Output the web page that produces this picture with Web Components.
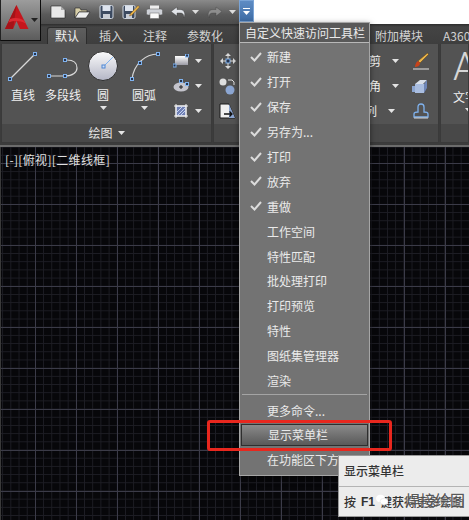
<!DOCTYPE html>
<html>
<head>
<meta charset="utf-8">
<style>
  html, body { margin: 0; background: #fff; }
  body { width: 469px; height: 520px; overflow: hidden; font: 12px/1 "Noto Sans CJK SC", "Liberation Sans", sans-serif; }
</style>
</head>
<body>
<cad-window>
  <cad-qat></cad-qat>
  <cad-tabs></cad-tabs>
  <cad-ribbon></cad-ribbon>
  <cad-canvas></cad-canvas>
  <cad-app></cad-app>
  <cad-menu></cad-menu>
  <cad-callout></cad-callout>
  <cad-tooltip></cad-tooltip>
</cad-window>

<script>
// small helper, every component below uses it
function define(name, html, setup){
  customElements.define(name, class extends HTMLElement {
    constructor(){
      super();
      this.attachShadow({mode:'open'}).innerHTML = html;
      if(setup) setup(this);
    }
  });
}

/* -----------------------
   ICONS
------------------------ */
const H = (x,y)=>`<rect x="${x-1.5}" y="${y-1.5}" width="3" height="3" fill="#26344e" stroke="#7fb2ee"/>`;
const svg = (w,h,body)=>`<svg width="${w}" height="${h}" viewBox="0 0 ${w} ${h}" style="display:block">${body}</svg>`;
const down = (c='#e4e4e4')=>`<svg width="7" height="4" viewBox="0 0 7 4" style="display:block"><path d="M0 0H7L3.5 4Z" fill="${c}"/></svg>`;

const ICONS = {
  line: svg(32,32,`<path d="M3 29 27 5" stroke="#d8d8d8" stroke-width="1.2"/>${H(3,29)}${H(28,4)}`),
  pline: svg(34,32,`<path d="M5 26H21C29 26 33 22 33 18 33 12 28 10 23 10" transform="translate(-2 0)" fill="none" stroke="#d8d8d8" stroke-width="1.2"/>${H(3,26)}${H(19,26)}${H(19,10)}`),
  circle: svg(32,32,`<defs><linearGradient id="c" x1="0" y1="0" x2="0" y2="1"><stop offset="0" stop-color="#fbfbfb"/><stop offset="1" stop-color="#b4b6c6"/></linearGradient></defs><circle cx="16" cy="16" r="14.5" fill="url(#c)" stroke="#2e2e2e"/><path d="M17 16 26 7" stroke="#7fb2ee"/><rect x="15" y="15" width="3" height="3" fill="#cfe0f8" stroke="#4f86d2"/>`),
  arc: svg(32,32,`<path d="M4 29C6 14 17 4 30 4" fill="none" stroke="#d8d8d8" stroke-width="1.2"/>${H(4,29)}${H(12,13)}${H(30,4)}`),
  rect: svg(16,14,`<defs><linearGradient id="r" x1="0" y1="0" x2="0" y2="1"><stop offset="0" stop-color="#fff"/><stop offset="1" stop-color="#9a9aa4"/></linearGradient></defs><rect x="2" y="2" width="13" height="9" fill="url(#r)"/>${H(1.5,11.5)}${H(14,1.5)}`),
  ellipse: svg(16,14,`<ellipse cx="8" cy="8" rx="7.5" ry="4.5" fill="#c4c4cc"/><path d="M6 8h4M8 6v4" stroke="#222"/>${H(8,2)}${H(14,5)}`),
  hatch: svg(16,16,`<rect x="3" y="3" width="10" height="10" fill="#6f7fb4" stroke="#fff"/><path d="M3 1V15M13 1V15M1 3H15M1 13H15" stroke="#f0f0f0"/><path d="M5 12 12 5M4 9 9 4M8 12 12 8" stroke="#c6d4f0"/>`),
  move: svg(16,16,`<path d="M8 0 11 3H5ZM8 16 5 13H11ZM0 8 3 5V11ZM16 8 13 11V5Z" fill="#d8d8d8"/><rect x="6" y="6" width="4" height="4" fill="#26344e" stroke="#7fb2ee"/><path d="M3 8H6M10 8H13M8 3V6M8 10V13" stroke="#d8d8d8"/>`),
  copy: svg(17,17,`<circle cx="4" cy="4" r="3.5" fill="#dedede"/><circle cx="11" cy="12" r="4.5" fill="#8ca6d2"/><path d="M9 2h4l2 2v3" fill="none" stroke="#e0e0e0"/>`),
  stretch: svg(17,16,`<path d="M1 1H10L16 15H1Z" fill="#f0f0f0" stroke="#1b1b1b"/><path d="M10 1 16 15H10Z" fill="#8ca6d2"/><path d="M5 11H13M10.5 8.5 13 11 10.5 13.5" fill="none" stroke="#111" stroke-width="1.3"/>`),
  brush: svg(17,18,`<path d="M15.5 1 16.5 2.5 8 11 6 9Z" fill="#eab54a" stroke="#5a3a10" stroke-width=".5"/><path d="M6 9 8 11C8 14 5 15 3 15 3 13 4 10 6 9Z" fill="#c8431a"/><path d="M1 17H17" stroke="#e4e4e4"/>`),
  block: svg(17,15,`<path d="M3 5 8 1H15L11 5Z" fill="#d8dfea"/><rect x="3" y="5" width="9" height="9" fill="#a9bde0"/><path d="M12 5 15 1V9L12 14Z" fill="#6e86b8"/><path d="M0 7H3V13H0Z" fill="#8ca6d2"/>`),
  explode: svg(16,16,`<path d="M1 14V11C1 9 3 9 5 9V4C5 2 6 1 8 1S11 2 11 4V9C13 9 15 9 15 11V14Z" fill="none" stroke="#7fb2ee" stroke-width="1.3"/><path d="M1 15H15" stroke="#d8d8d8"/>`)
};

const QAT = [
  svg(16,14,`<path d="M1 1H11L15 5V13H1Z" fill="#e8e8e8" stroke="#222" stroke-width=".6"/><path d="M11 1V5H15" fill="#aaa"/>`),
  svg(17,14,`<path d="M1 3H6L7 5H13V7H5L1 13Z" fill="#d8cfa8" stroke="#222" stroke-width=".6"/><path d="M5 7H16L12 13H1Z" fill="#eee" stroke="#222" stroke-width=".6"/>`),
  svg(15,14,`<rect x="1" y="0.5" width="13" height="13" rx="1.5" fill="#3c4a60" stroke="#cfd6e0"/><rect x="3.5" y="1" width="8" height="5" fill="#dde3ee"/><rect x="4" y="9" width="7" height="4.5" fill="#c8ccd4"/>`),
  svg(18,14,`<rect x="1" y="0.5" width="12" height="13" rx="1.5" fill="#3c4a60" stroke="#cfd6e0"/><rect x="3" y="1" width="8" height="5" fill="#dde3ee"/><rect x="4" y="9" width="6" height="4.5" fill="#c8ccd4"/><path d="M16 0.5 17.5 2 10 10 7.5 11 8.5 8.5Z" fill="#eab54a" stroke="#5a3a10" stroke-width=".4"/>`),
  svg(17,14,`<rect x="4" y="0.5" width="9" height="4" fill="#eee"/><rect x="0.5" y="4" width="16" height="6" rx="1.5" fill="#cfd2d8" stroke="#555" stroke-width=".5"/><rect x="4" y="8" width="9" height="5.5" fill="#fafafa" stroke="#666" stroke-width=".5"/>`),
  svg(16,12,`<path d="M7 1 1 5.5 7 10V7H10C13 7 14 8.5 14 12 16 7 14 3.5 10 3.5H7Z" fill="#e0e3e8" stroke="#333" stroke-width=".4"/>`),
  svg(16,12,`<path d="M9 1 15 5.5 9 10V7H6C3 7 2 8.5 2 12 0 7 2 3.5 6 3.5H9Z" fill="#8d8d8d" stroke="#444" stroke-width=".4"/>`)
];

/* -----------------------
   WINDOW
------------------------ */
define('cad-window', `
  <style>
    :host { position: relative; display: flex; flex-direction: column; width: 469px; height: 520px; overflow: hidden; background: #fff; }
  </style>
  <slot></slot>
`);

// application button, sits over the toolbar and the tab row
define('cad-app', `
  <style>
    :host { position: absolute; left: 0; top: 0; width: 41px; height: 41px; box-sizing: border-box; border-right: 1px solid #0c0c0c; border-bottom: 1px solid #0c0c0c; border-left: 1px solid #222;
      background: linear-gradient(180deg,#9c9c9c,#5c5c5c); z-index: 3; }
    svg { position: absolute; display: block; }
  </style>
  <svg style="left:4px;top:5px" width="24" height="25" viewBox="0 0 24 25">
    <path d="M11.5 0 23.5 24H15L11.5 16 8 24H0Z" fill="#c5161d"/>
    <path d="M11.5 0 8 24H0Z" fill="#a51218"/>
    <path d="M5 14C10 12 16 13 19.5 16L20.5 18.5C15 15.5 9 15.5 3.5 17.5Z" fill="#dc2a32"/>
  </svg>
  <svg style="left:30px;top:18px" width="7" height="4" viewBox="0 0 7 4"><path d="M0 0H7L3.5 4Z" fill="#222"/></svg>
`);

/* -----------------------
   QUICK ACCESS TOOLBAR
------------------------ */
define('cad-qat', `
  <style>
    :host { display: flex; height: 24px; flex: none; background: #fff; padding-left: 41px; }
    .bar { width: 198px; height: 24px; box-sizing: border-box; padding-left: 9px; display: flex; align-items: center; background: linear-gradient(180deg,#8a8a8a,#5a5a5a 60%,#4c4c4c); }
    .bar > * { flex: none; }
    .more { width: 15px; height: 22px; background: linear-gradient(180deg,#5e8cc4,#3f6da6); display: flex; flex-direction: column; align-items: center; justify-content: center; gap: 2px; box-sizing: border-box; border: 1px solid #7aa4d6; }
    .more i { display: block; width: 7px; height: 1px; background: #fff; }
    .g { margin-right: 8px; }
    .a { margin: 0 8px 0 6px; }
  </style>
  <div class="bar">
    <span class="g">${QAT[0]}</span><span class="g">${QAT[1]}</span><span class="g">${QAT[2]}</span><span class="g" style="margin-right:6px">${QAT[3]}</span><span class="g" style="margin-right:7px">${QAT[4]}</span>
    <span>${QAT[5]}</span><span class="a">${down('#ddd')}</span><span>${QAT[6]}</span><span class="a">${down('#ddd')}</span>
  </div>
  <div class="more"><i></i>${down('#fff')}</div>
`);

/* -----------------------
   TABS
------------------------ */
define('cad-tabs', `
  <style>
    :host { display: flex; height: 20px; flex: none; box-sizing: border-box; padding: 3px 0 0 47px; background: linear-gradient(180deg,#2e2e2e 0,#444 3px,#3e3e3e); color: #d2d2d2; overflow: hidden; align-items: stretch; white-space: nowrap; }
    span { padding: 0 8px; margin-right: 4px; display: flex; align-items: center; flex: none; }
    .on { background: linear-gradient(180deg,#5f5f5f,#535353); color: #f0f0f0; border-radius: 2px 2px 0 0; box-shadow: inset 1px 1px 0 #2c2c2c, inset -1px 0 0 #2c2c2c; }
    .gap { width: 128px; padding: 0; }
  </style>
  <span class="on">默认</span><span>插入</span><span>注释</span><span>参数化</span><span class="gap"></span><span>附加模块</span><span>A360</span>
`);

/* -----------------------
   RIBBON PANELS
------------------------ */
define('cad-ribbon', `
  <style>
    :host { display: flex; height: 103px; flex: none; box-sizing: border-box; padding-bottom: 2px; background: #3c3c3c; border-bottom: 2px solid #6c6c6c; }
  </style>
  <cad-panel style="width:211px" title-text="绘图" pad="1">
    <cad-tool icon="line" label="直线" w="40"></cad-tool>
    <cad-tool icon="pline" label="多段线" w="40"></cad-tool>
    <cad-tool icon="circle" label="圆" w="40" drop></cad-tool>
    <cad-tool icon="arc" label="圆弧" w="42" drop></cad-tool>
    <cad-stack style="margin-left:7px">
      <cad-row icon="rect" drop></cad-row>
      <cad-row icon="ellipse" drop></cad-row>
      <cad-row icon="hatch" drop></cad-row>
    </cad-stack>
  </cad-panel>
  <cad-panel style="width:226px" pad="5">
    <cad-stack>
      <cad-row icon="move"></cad-row>
      <cad-row icon="copy"></cad-row>
      <cad-row icon="stretch"></cad-row>
    </cad-stack>
    <cad-stack style="margin-left:auto;align-items:flex-end">
      <cad-row text="剪" drop></cad-row>
      <cad-row text="角" drop></cad-row>
      <cad-row text="列" drop style="margin-right:4px"></cad-row>
    </cad-stack>
    <cad-stack style="margin-left:13px;margin-right:9px">
      <cad-row icon="brush"></cad-row>
      <cad-row icon="block"></cad-row>
      <cad-row icon="explode"></cad-row>
    </cad-stack>
  </cad-panel>
  <cad-panel style="flex:1;min-width:0" pad="12">
    <cad-text-tool></cad-text-tool>
  </cad-panel>
`);

define('cad-panel', `
  <style>
    :host { display: flex; flex-direction: column; flex: none; box-sizing: border-box; margin-left: 1px; background: #535353; border: 1px solid #3a3a3a; border-top: 0; overflow: hidden; }
    .tools { flex: 1; display: flex; min-height: 0; padding-top: 5px; }
    .title { height: 18px; background: #484848; display: flex; align-items: center; justify-content: center; gap: 5px; color: #e6e6e6; flex: none; }
  </style>
  <div class="tools"><slot></slot></div>
  <div class="title"></div>
`, el=>{
  queueMicrotask(()=>{
    el.shadowRoot.querySelector('.tools').style.paddingLeft = (el.getAttribute('pad')||0)+'px';
    const t = el.getAttribute('title-text');
    if(t) el.shadowRoot.querySelector('.title').innerHTML = `<span>${t}</span>${down()}`;
  });
});

define('cad-tool', `
  <style>
    :host { display: flex; flex-direction: column; align-items: center; flex: none; color: #f0f0f0; white-space: nowrap; }
    .i { height: 32px; display: flex; align-items: center; justify-content: center; margin-top: 1px; }
    .l { margin-top: 6px; height: 14px; line-height: 14px; }
    .d { margin-top: 4px; height: 4px; }
  </style>
  <div class="i"></div><div class="l"></div><div class="d"></div>
`, el=>{
  queueMicrotask(()=>{
    el.style.width = el.getAttribute('w')+'px';
    const s = el.shadowRoot;
    s.querySelector('.i').innerHTML = ICONS[el.getAttribute('icon')];
    s.querySelector('.l').textContent = el.getAttribute('label');
    if(el.hasAttribute('drop')) s.querySelector('.d').innerHTML = down();
  });
});

define('cad-stack', `
  <style>
    :host { display: flex; flex-direction: column; gap: 7px; padding-top: 3px; flex: none; }
  </style>
  <slot></slot>
`);

define('cad-row', `
  <style>
    :host { display: flex; align-items: center; height: 18px; gap: 6px; color: #f0f0f0; white-space: nowrap; }
    :host([text]) { gap: 11px; }
    .i { width: 17px; display: flex; justify-content: center; }
    .i:empty, .t:empty, .d:empty { display: none; }
  </style>
  <div class="i"></div><div class="t"></div><div class="d"></div>
`, el=>{
  queueMicrotask(()=>{
    const s = el.shadowRoot;
    const ic = el.getAttribute('icon');
    if(ic) s.querySelector('.i').innerHTML = ICONS[ic];
    s.querySelector('.t').textContent = el.getAttribute('text')||'';
    if(el.hasAttribute('drop')) s.querySelector('.d').innerHTML = down();
  });
});

define('cad-text-tool', `
  <style>
    :host { display: flex; flex-direction: column; color: #f0f0f0; white-space: nowrap; }
    .a { font: 300 38px/32px Roboto, "Liberation Sans", sans-serif; color: #d6d6d6; height: 32px; margin-top: 2px; }
    .l { margin-top: 7px; height: 14px; line-height: 14px; }
    .d { margin: 4px 0 0 12px; }
  </style>
  <div class="a">A</div><div class="l">文字</div><div class="d">${down()}</div>
`);

/* -----------------------
   CANVAS
------------------------ */
define('cad-canvas', `
  <style>
    :host { display: block; flex: 1; min-height: 0; color: #e0e0e0;
      background-color: #07070a;
      background-image:
        linear-gradient(#3b3b48 1px, transparent 1px),
        linear-gradient(90deg, #3b3b48 1px, transparent 1px),
        linear-gradient(#1d1d24 1px, transparent 1px),
        linear-gradient(90deg, #1d1d24 1px, transparent 1px);
      background-size: 41px 41px, 41px 41px, 8.2px 8.2px, 8.2px 8.2px;
      background-position: 0 16px, 35px 0, 0 7.8px, 2.2px 0;
      box-shadow: inset 1px 0 0 #3a3a3a; }
    .v { padding: 6px 0 0 5px; line-height: 14px; letter-spacing: .35px; }
  </style>
  <div class="v">[-][俯视][二维线框]</div>
`);

/* -----------------------
   CUSTOMIZE MENU
------------------------ */
const MENU = [
  ['新建',1],['打开',1],['保存',1],['另存为...',1],['打印',1],['放弃',1],['重做',1],
  ['工作空间'],['特性匹配'],['批处理打印'],['打印预览'],['特性'],['图纸集管理器'],['渲染']
];
const row = ([t,c])=>`<div class="it">${c?`<svg class="ck" width="12" height="10" viewBox="0 0 12 10"><path d="M1 5 4.5 8.5 11 1" fill="none" stroke="#dcdcdc" stroke-width="2"/></svg>`:''}<span>${t}</span></div>`;

define('cad-menu', `
  <style>
    :host { position: absolute; left: 239px; top: 22px; width: 131px; height: 454px; box-sizing: border-box; display: flex; flex-direction: column; background: #737373; border: 1px solid #a6a6a6; color: #eaeaea; box-shadow: 0 2px 6px rgba(0,0,0,.5); white-space: nowrap; overflow: hidden; z-index: 5; }
    .hd { height: 20px; flex: none; box-sizing: border-box; background: #595959; border-bottom: 1px solid #b8b8b8; padding-left: 5px; display: flex; align-items: center; }
    .list { padding-top: 2px; }
    .it { height: 24.9px; display: flex; align-items: center; padding-left: 27px; position: relative; flex: none; }
    .ck { position: absolute; left: 10px; top: 7px; }
    hr { height: 1px; border: 0; background: #a4a4a4; margin: 1px 2px 3px; flex: none; }
    .hot { height: 22px; margin: 1px 0 1px 1px; width: 127px; box-sizing: border-box; padding-left: 26px; background: linear-gradient(180deg,#8a8a8a,#595959); border: 1px solid #2e2e2e; }
  </style>
  <div class="hd">自定义快速访问工具栏</div>
  <div class="list">${MENU.map(row).join('')}</div>
  <hr>
  <div class="it">更多命令...</div>
  <div class="it hot">显示菜单栏</div>
  <div class="it">在功能区下方</div>
`);

/* -----------------------
   TOOLTIP + CALLOUT
------------------------ */
define('cad-tooltip', `
  <style>
    :host { position: absolute; left: 338px; top: 455px; width: 131px; height: 62px; box-sizing: border-box; background: #ececec; border: 1px solid #9a9a9a; border-right: 0; color: #333; z-index: 7; white-space: nowrap; }
    .a { height: 30px; display: flex; align-items: center; padding-left: 5px; font-weight: 500; border-bottom: 1px solid #b4b4b4; }
    .b { height: 29px; display: flex; align-items: center; padding-left: 5px; font-weight: 500; }
    .b b { margin: 0 5px; font-family: "Liberation Sans", sans-serif; }
    .mark { position: absolute; left: 37px; top: 36px; display: flex; align-items: center; color: rgba(60,60,60,.85); font-weight: 500; font-size: 15px; line-height: 15px; }
    .mark span { margin-left: 17px; text-shadow: 0 0 2px #fff; }
  </style>
  <div class="a">显示菜单栏</div>
  <div class="b">按<b>F1</b>键获得更多帮助</div>
  <div class="mark">
    <svg width="12" height="12" viewBox="0 0 12 12"><ellipse cx="4.5" cy="4.5" rx="4.5" ry="3.8" fill="#fff"/><ellipse cx="8" cy="7.5" rx="4" ry="3.2" fill="#fff" stroke="#ddd" stroke-width=".5"/></svg>
    <span>焊接绘图</span>
  </div>
`);

define('cad-callout', `
  <style>
    :host { position: absolute; left: 207px; top: 420px; width: 185px; height: 31px; box-sizing: border-box; border: 3px solid #e8271e; border-radius: 3px; z-index: 6; pointer-events: none; }
  </style>
`);
</script>
</body>
</html>
